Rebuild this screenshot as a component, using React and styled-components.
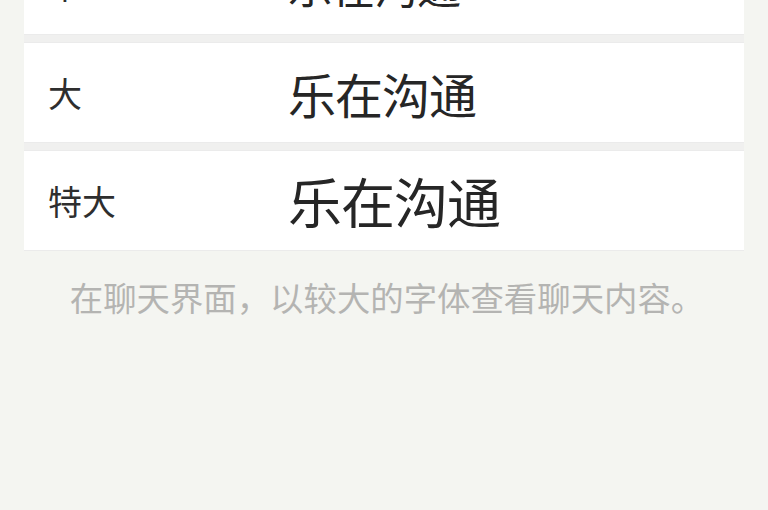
import React from 'react';
import styled, { createGlobalStyle } from 'styled-components';

const GlobalStyle = createGlobalStyle`
  html, body {
    margin: 0;
    padding: 0;
    background: #f4f5f1;
  }
  body {
    font-family: "Noto Sans CJK SC", "Noto Sans", sans-serif;
  }
`;

const Screen = styled.div`
  width: 768px;
  height: 510px;
  overflow: hidden;
  background: #f4f5f1;
`;

// list is scrolled, so the first row sits partly above the top edge
const Scroller = styled.div`
  margin-top: -66px;
`;

const List = styled.div`
  display: flex;
  flex-direction: column;
  gap: 7px;
  margin: 0 24px;
  background: #f0f0ef;
`;

const Row = styled.div`
  display: grid;
  grid-template-columns: 242px 1fr;
  align-items: center;
  height: 99px;
  padding: 0 24px;
  background: #ffffff;
  border-top: 1px solid #ebebeb;
  border-bottom: 1px solid #ebebeb;
`;

const Label = styled.span`
  font-size: 34px;
  color: #2e2e2e;
  line-height: 1;
`;

const Sample = styled.span`
  font-size: ${p => p.$size}px;
  color: #262626;
  line-height: 1;
  letter-spacing: -1px;
  margin-left: -2px;
`;

const Caption = styled.p`
  margin: 0;
  padding: 26px 0 0 6px;
  text-align: center;
  font-size: 33.4px;
  line-height: 40px;
  color: #b4b4b2;
`;

const sizes = [
  { label: '中', size: 44 },
  { label: '大', size: 48 },
  { label: '特大', size: 54 },
];

export default function App() {
  return (
    <Screen>
      <GlobalStyle />
      <Scroller>
        <List>
          {sizes.map(item => (
            <Row key={item.label}>
              <Label>{item.label}</Label>
              <Sample $size={item.size}>乐在沟通</Sample>
            </Row>
          ))}
        </List>
        <Caption>在聊天界面，以较大的字体查看聊天内容。</Caption>
      </Scroller>
    </Screen>
  );
}
